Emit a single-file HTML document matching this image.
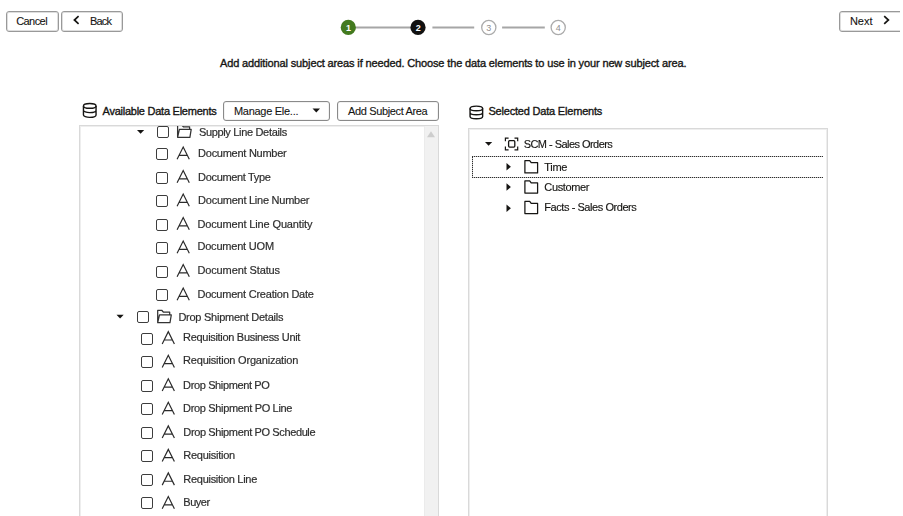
<!DOCTYPE html>
<html><head><meta charset="utf-8">
<style>
html,body{margin:0;padding:0;background:#fff;}
body{width:903px;height:516px;overflow:hidden;position:relative;font-family:"Liberation Sans",sans-serif;font-size:11px;color:#161513;}
.a{position:absolute;}
.t{position:absolute;white-space:nowrap;line-height:11px;}
.sb{-webkit-text-stroke:0.35px #161513;}
.btn{position:absolute;box-sizing:border-box;border:1px solid #999;border-radius:3px;height:21px;top:11px;background:#fff;box-shadow:inset 0 0 0 1px rgba(0,0,0,0.13);}
.btn2{position:absolute;box-sizing:border-box;border:1px solid #8a8a8a;border-radius:3px;height:20px;top:101px;background:#fff;box-shadow:inset 0 0 0 0.5px rgba(0,0,0,0.1);}
.cb{position:absolute;box-sizing:border-box;width:12px;height:12px;border:1.4px solid #3d3d3d;border-radius:2px;}
.tr{color:#2e2e2e;-webkit-text-stroke:0.2px #2e2e2e;}
.rt{-webkit-text-stroke:0.15px #161513;}
.bt{-webkit-text-stroke:0.1px #161513;}
.clipL{clip-path:inset(126px 0 0 0);will-change:transform;}
svg{position:absolute;overflow:visible;}
</style></head><body>
<div class="a" style="left:0;top:0;width:900px;height:516px;overflow:hidden;">
<div class="btn" style="left:6px;width:53px;"></div>
<div class="btn" style="left:61px;width:62px;"></div>
<div class="btn" style="left:839px;width:70px;"></div>
<svg style="left:0;top:0" width="903" height="40"><path d="M78.6,16.2 L74.4,20 L78.6,23.8 M884.2,16.2 L888.4,20 L884.2,23.8" fill="none" stroke="#161513" stroke-width="1.7"/></svg>
</div>

<svg style="left:0;top:0" width="903" height="45">
  <line x1="355" y1="27.5" x2="411" y2="27.5" stroke="#a6a6a6" stroke-width="2"/>
  <line x1="432.4" y1="27.5" x2="474.2" y2="27.5" stroke="#a6a6a6" stroke-width="2"/>
  <line x1="502.1" y1="27.5" x2="544.8" y2="27.5" stroke="#a6a6a6" stroke-width="2"/>
  <circle cx="348.3" cy="27.4" r="7.6" fill="#437a1f"/>
  <circle cx="418" cy="27.4" r="7.6" fill="#111"/>
  <circle cx="488.8" cy="27.5" r="7.1" fill="#fff" stroke="#ababab" stroke-width="1.3"/>
  <circle cx="558.2" cy="27.5" r="7.1" fill="#fff" stroke="#ababab" stroke-width="1.3"/>
  <text x="348.5" y="30.8" font-family="Liberation Sans" font-size="9" font-weight="bold" fill="#fff" text-anchor="middle">1</text>
  <text x="418.2" y="30.8" font-family="Liberation Sans" font-size="9" font-weight="bold" fill="#fff" text-anchor="middle">2</text>
  <text x="488.8" y="30.8" font-family="Liberation Sans" font-size="9" fill="#8f8f8f" text-anchor="middle">3</text>
  <text x="558.2" y="30.8" font-family="Liberation Sans" font-size="9" fill="#8f8f8f" text-anchor="middle">4</text>
</svg>

<svg style="left:0;top:0" width="903" height="130">
  <g fill="none" stroke="#161513" stroke-width="1.4">
    <ellipse cx="89.75" cy="105.9" rx="6.3" ry="2.4"/>
    <path d="M83.45,105.9 V115 A6.3,2.4 0 0 0 96.05,115 V105.9 M83.45,110.2 A6.3,2.4 0 0 0 96.05,110.2"/>
    <ellipse cx="476.35" cy="108.4" rx="6.3" ry="2.3"/>
    <path d="M470.05,108.4 V116.5 A6.3,2.3 0 0 0 482.65,116.5 V108.4 M470.05,112.5 A6.3,2.3 0 0 0 482.65,112.5"/>
  </g>
</svg>
<div class="btn2" style="left:223px;width:107px;"></div>
<svg style="left:0;top:0" width="903" height="130"><path d="M312.5,108.5 L320,108.5 L316.25,112.5 Z" fill="#161513"/></svg>
<div class="btn2" style="left:337px;width:102px;"></div>
<div class="t bt" style="left:16.2px;top:15.82px;letter-spacing:-0.568px;">Cancel</div>
<div class="t bt" style="left:89.98px;top:15.7px;letter-spacing:-0.784px;">Back</div>
<div class="t bt" style="left:849.88px;top:15.7px;letter-spacing:-0.01px;">Next</div>
<div class="t sb" style="left:220.0px;top:57.82px;letter-spacing:-0.135px;">Add additional subject areas if needed. Choose the data elements to use in your new subject area.</div>
<div class="t sb" style="left:102.56px;top:105.82px;letter-spacing:-0.25px;">Available Data Elements</div>
<div class="t bt" style="left:233.98px;top:105.6px;letter-spacing:-0.282px;">Manage Ele...</div>
<div class="t bt" style="left:348.0px;top:105.6px;letter-spacing:-0.357px;">Add Subject Area</div>
<div class="t sb" style="left:488.44px;top:106.48px;letter-spacing:-0.195px;">Selected Data Elements</div>

<div class="a" style="left:79px;top:125px;width:360px;height:400px;box-sizing:border-box;border:1px solid #d9d9d9;overflow:hidden;box-shadow:inset 1px 1px 0 #eeeeee;">
  <div class="a" style="left:344px;top:0;width:14px;height:400px;background:#f1f1f1;border-left:1px solid #ebebeb;"></div>
</div>
<svg style="left:0;top:0" width="903" height="516"><path d="M427,137.2 L435,137.2 L431,131.2 Z" fill="#cdcdcd"/></svg>

<div class="a" style="left:468px;top:128px;width:360px;height:400px;box-sizing:border-box;border:1px solid #d9d9d9;box-shadow:inset 1px 1px 0 #eeeeee, inset -1px 0 0 #eeeeee;"></div>
<div class="a" style="left:472px;top:156px;width:351px;height:22px;box-sizing:border-box;border:1px solid #c4c4c4;border-right:none;"></div>
<div class="a" style="left:472px;top:156px;width:351px;height:22px;box-sizing:border-box;border:1px dotted #2e2e2e;border-right:none;"></div>

<div class="a clipL" style="left:0;top:0;width:903px;height:516px;">
<div class="cb" style="left:157.00px;top:126.30px;"></div>
<div class="t tr" style="left:198.88px;top:126.94px;letter-spacing:-0.327px;">Supply Line Details</div>
<div class="cb" style="left:156.30px;top:148.00px;"></div>
<div class="t tr" style="left:198.1px;top:147.82px;letter-spacing:-0.264px;">Document Number</div>
<div class="cb" style="left:156.30px;top:171.50px;"></div>
<div class="t tr" style="left:198.1px;top:171.72px;letter-spacing:-0.334px;">Document Type</div>
<div class="cb" style="left:156.30px;top:195.00px;"></div>
<div class="t tr" style="left:198.1px;top:194.82px;letter-spacing:-0.254px;">Document Line Number</div>
<div class="cb" style="left:156.30px;top:218.50px;"></div>
<div class="t tr" style="left:197.42px;top:218.72px;letter-spacing:-0.142px;">Document Line Quantity</div>
<div class="cb" style="left:156.30px;top:242.00px;"></div>
<div class="t tr" style="left:197.42px;top:241.48px;letter-spacing:-0.195px;">Document UOM</div>
<div class="cb" style="left:156.30px;top:265.50px;"></div>
<div class="t tr" style="left:197.42px;top:265.38px;letter-spacing:-0.12px;">Document Status</div>
<div class="cb" style="left:156.30px;top:289.00px;"></div>
<div class="t tr" style="left:197.42px;top:288.94px;letter-spacing:-0.214px;">Document Creation Date</div>
<div class="cb" style="left:137.20px;top:311.10px;"></div>
<div class="t tr" style="left:178.42px;top:311.72px;letter-spacing:-0.253px;">Drop Shipment Details</div>
<div class="cb" style="left:141.20px;top:332.70px;"></div>
<div class="t tr" style="left:183.1px;top:332.38px;letter-spacing:-0.308px;">Requisition Business Unit</div>
<div class="cb" style="left:141.20px;top:356.24px;"></div>
<div class="t tr" style="left:183.1px;top:355.48px;letter-spacing:-0.204px;">Requisition Organization</div>
<div class="cb" style="left:141.20px;top:379.78px;"></div>
<div class="t tr" style="left:183.1px;top:379.72px;letter-spacing:-0.372px;">Drop Shipment PO</div>
<div class="cb" style="left:141.20px;top:403.32px;"></div>
<div class="t tr" style="left:183.1px;top:402.82px;letter-spacing:-0.344px;">Drop Shipment PO Line</div>
<div class="cb" style="left:141.20px;top:426.86px;"></div>
<div class="t tr" style="left:183.32px;top:427.06px;letter-spacing:-0.375px;">Drop Shipment PO Schedule</div>
<div class="cb" style="left:141.20px;top:450.40px;"></div>
<div class="t tr" style="left:183.32px;top:450.16px;letter-spacing:-0.253px;">Requisition</div>
<div class="cb" style="left:141.20px;top:473.94px;"></div>
<div class="t tr" style="left:183.32px;top:473.6px;letter-spacing:-0.285px;">Requisition Line</div>
<div class="cb" style="left:141.20px;top:497.48px;"></div>
<div class="t tr" style="left:183.32px;top:496.7px;letter-spacing:-0.467px;">Buyer</div>
<svg style="left:0;top:0" width="903" height="516"><path d="M137.00,129.90 H144.20 L140.60,133.70 Z" fill="#161513"/>
<path d="M177.60,137.30 V124.90 H181.60 L183.40,126.80 H189.60 V129.30 M177.60,137.30 L179.40,129.40 H191.20 L189.90,137.30 Z" fill="none" stroke="#333" stroke-width="1.25" stroke-linejoin="round"/>
<path d="M177.10,159.20 L183.20,147.00 L189.30,159.20 M179.40,155.30 H187.00" fill="none" stroke="#2b2b2b" stroke-width="1.2"/>
<path d="M177.10,182.70 L183.20,170.50 L189.30,182.70 M179.40,178.80 H187.00" fill="none" stroke="#2b2b2b" stroke-width="1.2"/>
<path d="M177.10,206.20 L183.20,194.00 L189.30,206.20 M179.40,202.30 H187.00" fill="none" stroke="#2b2b2b" stroke-width="1.2"/>
<path d="M177.10,229.70 L183.20,217.50 L189.30,229.70 M179.40,225.80 H187.00" fill="none" stroke="#2b2b2b" stroke-width="1.2"/>
<path d="M177.10,253.20 L183.20,241.00 L189.30,253.20 M179.40,249.30 H187.00" fill="none" stroke="#2b2b2b" stroke-width="1.2"/>
<path d="M177.10,276.70 L183.20,264.50 L189.30,276.70 M179.40,272.80 H187.00" fill="none" stroke="#2b2b2b" stroke-width="1.2"/>
<path d="M177.10,300.20 L183.20,288.00 L189.30,300.20 M179.40,296.30 H187.00" fill="none" stroke="#2b2b2b" stroke-width="1.2"/>
<path d="M116.50,314.70 H123.70 L120.10,318.50 Z" fill="#161513"/>
<path d="M157.70,322.70 V310.30 H161.70 L163.50,312.20 H169.70 V314.70 M157.70,322.70 L159.50,314.80 H171.30 L170.00,322.70 Z" fill="none" stroke="#333" stroke-width="1.25" stroke-linejoin="round"/>
<path d="M162.20,343.90 L168.30,331.70 L174.40,343.90 M164.50,340.00 H172.10" fill="none" stroke="#2b2b2b" stroke-width="1.2"/>
<path d="M162.20,367.44 L168.30,355.24 L174.40,367.44 M164.50,363.54 H172.10" fill="none" stroke="#2b2b2b" stroke-width="1.2"/>
<path d="M162.20,390.98 L168.30,378.78 L174.40,390.98 M164.50,387.08 H172.10" fill="none" stroke="#2b2b2b" stroke-width="1.2"/>
<path d="M162.20,414.52 L168.30,402.32 L174.40,414.52 M164.50,410.62 H172.10" fill="none" stroke="#2b2b2b" stroke-width="1.2"/>
<path d="M162.20,438.06 L168.30,425.86 L174.40,438.06 M164.50,434.16 H172.10" fill="none" stroke="#2b2b2b" stroke-width="1.2"/>
<path d="M162.20,461.60 L168.30,449.40 L174.40,461.60 M164.50,457.70 H172.10" fill="none" stroke="#2b2b2b" stroke-width="1.2"/>
<path d="M162.20,485.14 L168.30,472.94 L174.40,485.14 M164.50,481.24 H172.10" fill="none" stroke="#2b2b2b" stroke-width="1.2"/>
<path d="M162.20,508.68 L168.30,496.48 L174.40,508.68 M164.50,504.78 H172.10" fill="none" stroke="#2b2b2b" stroke-width="1.2"/></svg>
</div>
<div class="t rt" style="left:523.66px;top:138.94px;letter-spacing:-0.541px;">SCM - Sales Orders</div>
<div class="t rt" style="left:544.32px;top:162.06px;letter-spacing:-0.316px;">Time</div>
<div class="t rt" style="left:544.32px;top:181.94px;letter-spacing:-0.351px;">Customer</div>
<div class="t rt" style="left:544.32px;top:202.38px;letter-spacing:-0.439px;">Facts - Sales Orders</div>
<svg style="left:0;top:0" width="903" height="516"><path d="M485.00,142.00 H492.20 L488.60,145.80 Z" fill="#161513"/>
<path d="M505.40,141.30 V138.10 H508.60 M514.50,138.10 H517.70 V141.30 M517.70,146.60 V149.80 H514.50 M508.60,149.80 H505.40 V146.60" fill="none" stroke="#161513" stroke-width="1.2"/>
<rect x="508.6" y="140.7" width="6.2" height="6.4" rx="1" fill="none" stroke="#161513" stroke-width="1.3"/>
<path d="M506.50,163.00 V170.60 L510.90,166.80 Z" fill="#161513"/>
<path d="M524.90,160.70 H529.70 L531.20,162.70 H537.60 V172.90 H524.90 Z" fill="none" stroke="#161513" stroke-width="1.25" stroke-linejoin="round"/>
<path d="M506.50,183.20 V190.80 L510.90,187.00 Z" fill="#161513"/>
<path d="M524.90,180.90 H529.70 L531.20,182.90 H537.60 V193.10 H524.90 Z" fill="none" stroke="#161513" stroke-width="1.25" stroke-linejoin="round"/>
<path d="M506.50,204.40 V212.00 L510.90,208.20 Z" fill="#161513"/>
<path d="M524.90,201.40 H529.70 L531.20,203.40 H537.60 V213.60 H524.90 Z" fill="none" stroke="#161513" stroke-width="1.25" stroke-linejoin="round"/></svg>

</body></html>
